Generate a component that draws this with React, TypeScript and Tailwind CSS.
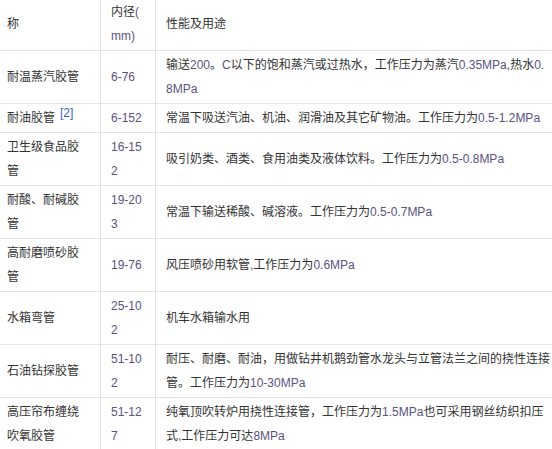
import React from "react";

type Row = {
  name: React.ReactNode;
  size: string[];
  use: string[];
};

// latin runs (numbers, units) render in a lighter purple-grey
function Mixed({ text }: { text: string }) {
  const parts = text.split(/([\x20-\x7e]+)/).filter(Boolean);
  return (
    <>
      {parts.map((p, i) =>
        /^[\x20-\x7e]+$/.test(p) ? (
          <span key={i} className="text-[#5a537f]">
            {p}
          </span>
        ) : (
          <span key={i}>{p}</span>
        ),
      )}
    </>
  );
}

function Lines({ lines }: { lines: string[] }) {
  return (
    <>
      {lines.map((l, i) => (
        <div key={i}>
          <Mixed text={l} />
        </div>
      ))}
    </>
  );
}

const rows: Row[] = [
  {
    name: "耐温蒸汽胶管",
    size: ["6-76"],
    use: ["输送200。C以下的饱和蒸汽或过热水，工作压力为蒸汽0.35MPa,热水0.", "8MPa"],
  },
  {
    name: (
      <>
        耐油胶管
        <span className="ml-[5px] text-[12px] leading-none text-[#3366cc] align-[5px]">[2]</span>
      </>
    ),
    size: ["6-152"],
    use: ["常温下吸送汽油、机油、润滑油及其它矿物油。工作压力为0.5-1.2MPa"],
  },
  {
    name: (
      <>
        <div>卫生级食品胶</div>
        <div>管</div>
      </>
    ),
    size: ["16-15", "2"],
    use: ["吸引奶类、酒类、食用油类及液体饮料。工作压力为0.5-0.8MPa"],
  },
  {
    name: (
      <>
        <div>耐酸、耐碱胶</div>
        <div>管</div>
      </>
    ),
    size: ["19-20", "3"],
    use: ["常温下输送稀酸、碱溶液。工作压力为0.5-0.7MPa"],
  },
  {
    name: (
      <>
        <div>高耐磨喷砂胶</div>
        <div>管</div>
      </>
    ),
    size: ["19-76"],
    use: ["风压喷砂用软管,工作压力为0.6MPa"],
  },
  {
    name: "水箱弯管",
    size: ["25-10", "2"],
    use: ["机车水箱输水用"],
  },
  {
    name: "石油钻探胶管",
    size: ["51-10", "2"],
    use: ["耐压、耐磨、耐油，用做钻井机鹅劲管水龙头与立管法兰之间的挠性连接", "管。工作压力为10-30MPa"],
  },
  {
    name: (
      <>
        <div>高压帘布缠绕</div>
        <div>吹氧胶管</div>
      </>
    ),
    size: ["51-12", "7"],
    use: ["纯氧顶吹转炉用挠性连接管，工作压力为1.5MPa也可采用钢丝纺织扣压", "式,工作压力可达8MPa"],
  },
];

const cell = "flex flex-col justify-center py-[2px] px-[10px]";

export default function App() {
  return (
    <div className="w-[552px] h-[449px] overflow-hidden bg-white">
      <div
        className="w-[640px] -ml-[3px] -mt-[2px] text-[12px] leading-[24px] text-[#333] whitespace-nowrap"
        style={{ fontFamily: '"Liberation Sans", "Noto Sans CJK SC", sans-serif' }}
      >
        {/* header */}
        <div className="grid grid-cols-[104px_55px_1fr] border-b border-[#e3e3e3]">
          <div className={`${cell} border-r border-[#e3e3e3]`}>称</div>
          <div className={`${cell} border-r border-[#e3e3e3]`}>
            <div>
              内径<span className="text-[#5a537f]">(</span>
            </div>
            <div className="text-[#5a537f]">mm)</div>
          </div>
          <div className={cell}>性能及用途</div>
        </div>

        {rows.map((r, i) => (
          <div
            key={i}
            className="grid grid-cols-[104px_55px_1fr] border-b border-[#e3e3e3]"
          >
            <div className={`${cell} border-r border-[#e3e3e3]`}>
              <div>{r.name}</div>
            </div>
            <div className={`${cell} border-r border-[#e3e3e3]`}>
              <Lines lines={r.size} />
            </div>
            <div className={cell}>
              <Lines lines={r.use} />
            </div>
          </div>
        ))}
      </div>
    </div>
  );
}
